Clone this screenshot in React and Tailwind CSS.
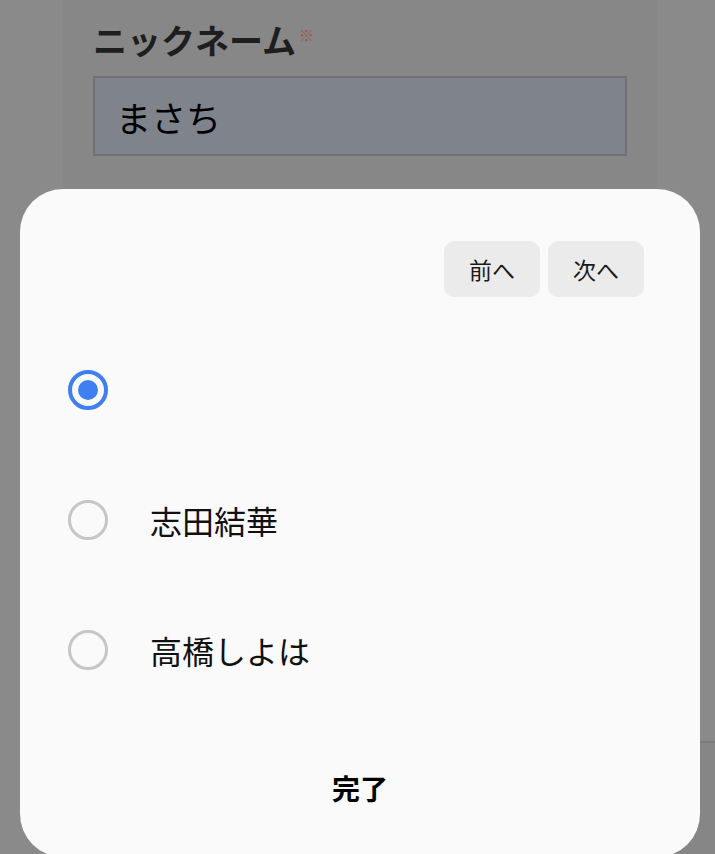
import { useState } from 'react';

const members = [
    { id: 'none', name: '' },
    { id: 'shida', name: '志田結華' },
    { id: 'takahashi', name: '高橋しよは' },
];

function Radio({ checked }) {
    if (checked) {
        return (
            <span className="w-[40px] h-[40px] rounded-full border-[4px] border-[#3f7ff2] flex items-center justify-center shrink-0">
                <span className="w-[20px] h-[20px] rounded-full bg-[#3f7ff2]"></span>
            </span>
        );
    }
    return <span className="w-[40px] h-[40px] rounded-full border-[3px] border-[#c6c6c6] shrink-0"></span>;
}

export default function App() {
    const [selected, setSelected] = useState('none');

    return (
        <div
            className="relative w-[715px] h-[854px] overflow-hidden bg-[#8a8a8a]"
            style={{ fontFamily: '"Noto Sans CJK JP", "Noto Sans", sans-serif' }}
        >
            {/* Form column behind the sheet */}
            <div className="ml-[63px] w-[594px] h-full bg-[#878787] pt-[20px] px-[30px]">
                <label className="flex items-start h-[40px] leading-[40px] text-[34px] font-bold text-[#1e1e1e]">
                    ニックネーム
                    <span className="text-[15px] leading-[30px] text-[#a0524f] ml-[3px]">※</span>
                </label>
                <div className="mt-[16px] h-[80px] bg-[#7f838c] border-2 border-[#6f7176] flex items-center px-[21px]">
                    <span className="text-[35px] text-black leading-none">まさち</span>
                </div>
            </div>

            {/* Footer bar edge behind the sheet */}
            <div className="absolute left-[640px] right-0 top-[741px] bottom-0 bg-[#868686] border-t-2 border-[#7b7b7b]"></div>

            {/* Bottom sheet */}
            <div className="absolute left-[20px] top-[189px] w-[680px] h-[668px] bg-[#fafafa] rounded-[43px]">
                <div className="flex justify-end gap-[8px] pt-[52px] pr-[56px]">
                    <button className="w-[96px] h-[56px] rounded-[10px] bg-[#ebebeb] text-[23px] text-[#1a1a1a]">
                        前へ
                    </button>
                    <button className="w-[96px] h-[56px] rounded-[10px] bg-[#ebebeb] text-[23px] text-[#1a1a1a]">
                        次へ
                    </button>
                </div>

                <div className="mt-[28px]">
                    {members.map(member => (
                        <div
                            key={member.id}
                            onClick={() => setSelected(member.id)}
                            className="h-[130px] flex items-center gap-[42px] pl-[48px]"
                        >
                            <Radio checked={selected === member.id} />
                            <span className="text-[32px] text-[#111]">{member.name}</span>
                        </div>
                    ))}
                </div>

                <div className="h-[146px] flex items-center justify-center">
                    <button className="text-[28px] font-bold text-black">完了</button>
                </div>
            </div>
        </div>
    );
}
